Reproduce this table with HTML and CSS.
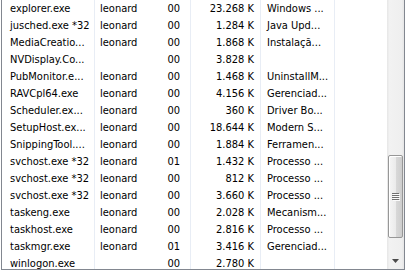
FILE: index.html
```html
<!DOCTYPE html>
<html>
<head>
<meta charset="utf-8">
<link rel="stylesheet" href="styles.css">
</head>
<body>
<div class="frame">
  <div class="list">
    <div class="row"><span class="c name">explorer.exe</span><span class="c user">leonard</span><span class="c cpu">00</span><span class="c mem">23.268 K</span><span class="c desc">Windows ...</span><span class="c fill"></span></div>
    <div class="row"><span class="c name">jusched.exe *32</span><span class="c user">leonard</span><span class="c cpu">00</span><span class="c mem">1.284 K</span><span class="c desc">Java Upd...</span><span class="c fill"></span></div>
    <div class="row"><span class="c name">MediaCreatio...</span><span class="c user">leonard</span><span class="c cpu">00</span><span class="c mem">1.868 K</span><span class="c desc">Instalaçã...</span><span class="c fill"></span></div>
    <div class="row"><span class="c name">NVDisplay.Co...</span><span class="c user"></span><span class="c cpu">00</span><span class="c mem">3.828 K</span><span class="c desc"></span><span class="c fill"></span></div>
    <div class="row"><span class="c name">PubMonitor.e...</span><span class="c user">leonard</span><span class="c cpu">00</span><span class="c mem">1.468 K</span><span class="c desc">UninstallM...</span><span class="c fill"></span></div>
    <div class="row"><span class="c name">RAVCpl64.exe</span><span class="c user">leonard</span><span class="c cpu">00</span><span class="c mem">4.156 K</span><span class="c desc">Gerenciad...</span><span class="c fill"></span></div>
    <div class="row"><span class="c name">Scheduler.ex...</span><span class="c user">leonard</span><span class="c cpu">00</span><span class="c mem">360 K</span><span class="c desc">Driver Bo...</span><span class="c fill"></span></div>
    <div class="row"><span class="c name">SetupHost.ex...</span><span class="c user">leonard</span><span class="c cpu">00</span><span class="c mem">18.644 K</span><span class="c desc">Modern S...</span><span class="c fill"></span></div>
    <div class="row"><span class="c name">SnippingTool....</span><span class="c user">leonard</span><span class="c cpu">00</span><span class="c mem">1.884 K</span><span class="c desc">Ferramen...</span><span class="c fill"></span></div>
    <div class="row"><span class="c name">svchost.exe *32</span><span class="c user">leonard</span><span class="c cpu">01</span><span class="c mem">1.432 K</span><span class="c desc">Processo ...</span><span class="c fill"></span></div>
    <div class="row"><span class="c name">svchost.exe *32</span><span class="c user">leonard</span><span class="c cpu">00</span><span class="c mem">812 K</span><span class="c desc">Processo ...</span><span class="c fill"></span></div>
    <div class="row"><span class="c name">svchost.exe *32</span><span class="c user">leonard</span><span class="c cpu">00</span><span class="c mem">3.660 K</span><span class="c desc">Processo ...</span><span class="c fill"></span></div>
    <div class="row"><span class="c name">taskeng.exe</span><span class="c user">leonard</span><span class="c cpu">00</span><span class="c mem">2.028 K</span><span class="c desc">Mecanism...</span><span class="c fill"></span></div>
    <div class="row"><span class="c name">taskhost.exe</span><span class="c user">leonard</span><span class="c cpu">00</span><span class="c mem">2.816 K</span><span class="c desc">Processo ...</span><span class="c fill"></span></div>
    <div class="row"><span class="c name">taskmgr.exe</span><span class="c user">leonard</span><span class="c cpu">01</span><span class="c mem">3.416 K</span><span class="c desc">Gerenciad...</span><span class="c fill"></span></div>
    <div class="row"><span class="c name">winlogon.exe</span><span class="c user"></span><span class="c cpu">00</span><span class="c mem">2.780 K</span><span class="c desc"></span><span class="c fill"></span></div>
  </div>
  <div class="sb">
    <div class="thumb">
      <svg class="grip" width="8" height="8" viewBox="0 0 8 8">
        <rect x="0" y="0" width="7" height="1" fill="#6f6f6f"/>
        <rect x="1" y="1" width="7" height="1" fill="#fbfbfb"/>
        <rect x="0" y="2" width="7" height="1" fill="#6f6f6f"/>
        <rect x="1" y="3" width="7" height="1" fill="#fbfbfb"/>
        <rect x="0" y="4" width="7" height="1" fill="#6f6f6f"/>
        <rect x="1" y="5" width="7" height="1" fill="#fbfbfb"/>
        <rect x="0" y="6" width="7" height="1" fill="#6f6f6f"/>
        <rect x="1" y="7" width="7" height="1" fill="#fbfbfb"/>
      </svg>
    </div>
    <div class="down">
      <svg width="7" height="4" viewBox="0 0 7 4"><polygon points="0,0 7,0 3.5,4" fill="#4a4a4a"/></svg>
    </div>
  </div>
</div>
</body>
</html>
```

FILE: styles.css
```css
html, body {
  margin: 0;
  padding: 0;
  background: #ffffff;
}

body {
  font-family: "DejaVu Sans Condensed", "DejaVu Sans", sans-serif;
  font-stretch: semi-condensed;
  font-size: 11px;
  color: #000000;
}

.frame {
  margin-left: 1px;
  width: 402px;
  height: 269px;
  border: 1px solid #828790;
  border-top: none;
  display: flex;
  overflow: hidden;
}

.list {
  width: 385px;
  overflow: hidden;
  flex: none;
}

.row {
  display: flex;
  height: 17px;
  line-height: 18px;
  overflow: hidden;
  white-space: nowrap;
}

.c {
  box-sizing: border-box;
  height: 17px;
  border-right: 1px solid #e8edf5;
  overflow: hidden;
  flex: none;
}

.name {
  width: 93px;
  padding-left: 8px;
}

.user {
  width: 56px;
  padding-left: 5px;
  border-right: none;
}

.cpu {
  width: 40px;
  padding-right: 10px;
  text-align: right;
}

.mem {
  width: 70px;
  padding-right: 6px;
  text-align: right;
}

.desc {
  width: 74px;
  padding-left: 6px;
}

.fill {
  flex: 1;
  border-right: none;
}

.sb {
  width: 17px;
  flex: none;
  display: flex;
  flex-direction: column;
  background: linear-gradient(to right, #e6e6e6 0, #f2f2f2 15%, #efefef 85%, #e6e6e6 100%);
}

.thumb {
  margin: 155px 1px 0 1px;
  height: 83px;
  box-sizing: border-box;
  border: 1px solid #979797;
  border-radius: 2px;
  background: linear-gradient(to right, #f5f5f5 0, #ebebeb 50%, #d9d9d9 51%, #cdcdcd 100%);
  box-shadow: inset 1px 1px 0 #ffffff;
  display: flex;
  align-items: center;
  justify-content: center;
}

.grip {
  display: block;
}

.down {
  margin-top: auto;
  height: 17px;
  display: flex;
  align-items: center;
  justify-content: center;
}

.down svg {
  display: block;
}
```
